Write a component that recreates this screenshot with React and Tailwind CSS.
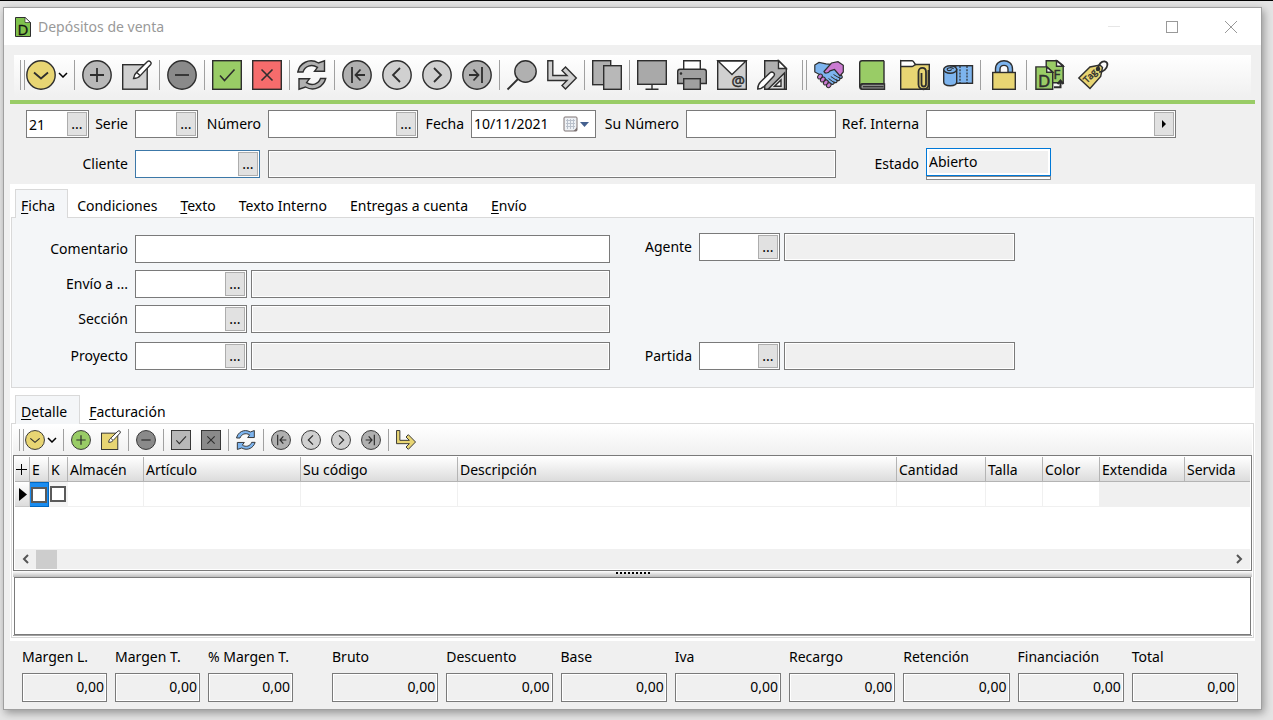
const INK = "#2e2e2e";

/* ---------- Icons (30x30 grid) ---------- */

function Icon({ size = 30, children }) {
  return (
    <svg
      width={size}
      height={size}
      viewBox="0 0 30 30"
      fill="none"
      stroke={INK}
      strokeWidth="1.4"
      className="shrink-0 overflow-visible"
      aria-hidden="true"
    >
      {children}
    </svg>
  );
}

function Circle({ size, fill, d }) {
  return (
    <Icon size={size}>
      <circle cx="15" cy="15" r="14.2" fill={fill} />
      <path d={d} strokeWidth="1.8" />
    </Icon>
  );
}

function Square({ size, fill, d }) {
  return (
    <Icon size={size}>
      <rect x="0.7" y="0.7" width="28.6" height="28.6" fill={fill} />
      <path d={d} strokeWidth="1.6" />
    </Icon>
  );
}

const PATHS = {
  down: "M8 12.5 15 18.5 22 12.5",
  plus: "M15 8v14M8 15h14",
  minus: "M8 15h14",
  check: "M8 15.5 12.5 20.5 22.5 9.5",
  cross: "M9.5 9.5l11 11M20.5 9.5l-11 11",
  first: "M10 7v16M23 15H14M18.5 9.5 13.5 15l5 5.5",
  prev: "M18 8l-7 7 7 7",
  next: "M12 8l7 7-7 7",
  last: "M20 7v16M7 15h9M11.5 9.5 16.5 15l-5 5.5",
};

function EditIcon({ size, fill }) {
  return (
    <Icon size={size}>
      <rect x="0.7" y="4.7" width="24.5" height="24.5" fill={fill} />
      <path d="M11.5 18.5c.3-3 1.2-4.800 3.300-6.400L25.500 1.600c1.800-1.700 4.800.9 3.200 2.900L18.300 15.600c-1.700 2-3.600 2.900-6.800 2.900z" fill="#fff" />
      <path d="M14.800 12.500l3.200 3" />
    </Icon>
  );
}

function RefreshIcon({ size, fill }) {
  return (
    <Icon size={size}>
      <path d="M.8 12C2.500 3.500 12-2.500 21.500 3L27.500.8v10.500H17.500l3-4C14 3.500 8 6.500 6 12z" fill={fill} />
      <path d="M28.700 18.500C26.500 26.500 17.500 32 8.500 27L2 29.200V18.700h10.500l-3 4c5.500 3.500 12 1.500 14-4.200z" fill={fill} />
    </Icon>
  );
}

function ForwardIcon({ size, fill }) {
  return (
    <Icon size={size}>
      <path d="M.8.8h5v14.700H20l-5-5L18.500 7l10.800 11-10.800 11-3.500-3.500 5-5H.8z" fill={fill} />
    </Icon>
  );
}

function SearchIcon() {
  return (
    <Icon>
      <path d="M.5 29.5 11.500 18.500" strokeWidth="1.8" />
      <circle cx="18.500" cy="11.500" r="10.700" fill="#b0b0b0" />
    </Icon>
  );
}

function CopyIcon() {
  return (
    <Icon>
      <rect x=".7" y=".7" width="18" height="24" fill="#b0b0b0" />
      <rect x="11.7" y="5.7" width="17.6" height="23.6" fill="#b8b8b8" />
    </Icon>
  );
}

function MonitorIcon() {
  return (
    <Icon>
      <rect x=".7" y=".7" width="28.6" height="23.6" fill="#a9a9a9" />
      <path d="M15 24v5M8.500 29.300h13" />
    </Icon>
  );
}

function PrinterIcon() {
  return (
    <Icon>
      <path d="M6.700 9V.7h16.600V9" fill="#fff" />
      <path d="M3 9.200h24c1.500 0 2.300.8 2.300 2.300v12H.7v-12C.7 10 1.500 9.200 3 9.200z" fill="#a0a0a0" />
      <rect x="6.7" y="18.7" width="16.6" height="10.6" fill="#a0a0a0" />
      <circle cx="4" cy="13.5" r=".6" fill={INK} />
    </Icon>
  );
}

function MailIcon() {
  return (
    <Icon>
      <rect x=".7" y=".7" width="28.6" height="28.6" fill="#d0d0d0" />
      <path d="M1 1 15 14.500 29 1z" fill="#fff" />
      <text x="14.500" y="26" fontSize="15" fill={INK} strokeWidth=".5" fontFamily="Open Sans, sans-serif">@</text>
    </Icon>
  );
}

function DesignIcon() {
  return (
    <Icon>
      <path d="M7.700.7h14l7.600 7.600v21H7.700z" fill="#b0b0b0" />
      <path d="M21.500.7v7.800h7.800z" fill="#fff" />
      <path d="M11 29.300 27.500 13v16.300z" fill="#d8d8d8" />
      <path d="M17.500 26.300 24 20v6.300z" fill="#fff" />
      <path d="M.7 29c0-3 .8-5 2.800-7L13 12.700c2.500-2 5.800.8 3.700 3.500L7.500 26C5.500 28 3.700 29 .7 29z" fill="#fff" />
    </Icon>
  );
}

function HandshakeIcon() {
  return (
    <Icon>
      <g strokeWidth="1.2">
        <path d="M.8 5 5 2.500l7 1.300 5 .5 11 11.700c1 1.500-.8 3-2.300 2 .8 2-1 3.500-2.700 2.200.6 2-1.200 3.200-2.800 2 .3 2-2 3-3.700 1.300L5.500 14.500.8 12z" fill="#7db4ee" />
        <path d="M10 11.500 17.500 3l6.500-1.300 5.300 3.500V12l-3.300 4-5.500-6.500-4.500 1.300c-2 2.700-5.500 3-6 .7z" fill="#cb7bd2" />
      </g>
      <g fill="#cb7bd2" strokeWidth="1">
        <ellipse cx="6" cy="16.500" rx="2.700" ry="2" transform="rotate(-48 6 16.500)" />
        <ellipse cx="8.800" cy="19.500" rx="2.700" ry="2" transform="rotate(-48 8.800 19.500)" />
        <ellipse cx="11.800" cy="22.500" rx="2.700" ry="2" transform="rotate(-48 11.800 22.500)" />
        <ellipse cx="14.800" cy="25.300" rx="2.600" ry="2" transform="rotate(-48 14.800 25.300)" />
      </g>
      <path d="M19.500 14.500l5.800 3.500M16.800 16.500l6 4M14.500 18.500l5.500 4" strokeWidth="1" />
    </Icon>
  );
}

function BookIcon() {
  return (
    <Icon>
      <path d="M27 .7H5C3.500.7 2.700 1.500 2.700 3v23.500c0 1.800 1 2.800 2.800 2.800H27" fill="#99cc66" />
      <path d="M27 .7v23H6c-2.200 0-3 1.200-3 2.600" />
      <path d="M27.500 24H6c-3 0-3.300 5.300 0 5.300h21.500z" fill="#8c8c8c" />
      <path d="M6 26.700h20.500" strokeWidth="1.200" />
    </Icon>
  );
}

function FolderIcon() {
  return (
    <Icon>
      <path d="M.7.7v28.600h28.600V4.500H15z" fill="#e8d573" />
      <path d="M.7.7h11.600c1.500 0 2.200 3.300 3.200 3.800-1.500.5-1.700 2-3.200 2H.7z" fill="#fff" />
      <path d="M28.500 10v14.500c0 6.300-10 6.300-10 0V12c0-5.500 7.500-5.500 7.500 0v12c0 3.300-4.500 3.300-4.500 0V13" strokeWidth="1.800" />
    </Icon>
  );
}

function RollIcon() {
  return (
    <Icon>
      <rect x="12" y="5.7" width="17.5" height="17.6" fill="#7db4ee" />
      <path d="M17 6v17M24 6v17" strokeDasharray="2 1.2" strokeWidth="1.2" />
      <path d="M.7 9.500V22c0 5 13 5 13 0V9.500z" fill="#7db4ee" />
      <ellipse cx="7.2" cy="9.5" rx="6.5" ry="3.8" fill="#7db4ee" />
      <path d="M10.500 9c-1-2-6.500-1.500-6.300.5.300 1.500 4.500 1.300 4-.3" strokeWidth="1.2" />
      <path d="M7.200 5.700H14" />
    </Icon>
  );
}

function LockIcon() {
  return (
    <Icon>
      <path d="M6.500 12.500V9c0-11 17-11 17 0v3.500H19V9.300c0-5.300-8-5.300-8 0v3.200z" fill="#7db4ee" />
      <rect x="3.7" y="12.5" width="22.6" height="16.8" fill="#e8d573" />
    </Icon>
  );
}

function InvoiceIcon() {
  return (
    <Icon>
      <path d="M11.200.7h11l6 5v17H11.200z" fill="#99cc66" />
      <path d="M21.500.7v5.500h6.700z" fill="#fff" />
      <text x="18.5" y="19" fontSize="13" fill={INK} strokeWidth=".5" fontFamily="Open Sans, sans-serif">F</text>
      <path d="M.9 6.900h11l5.800 5v17.300H.9z" fill="#99cc66" />
      <path d="M11.700 7v5.200h6z" fill="#fff" />
      <text x="3" y="26.5" fontSize="17" fill={INK} strokeWidth=".5" fontFamily="Open Sans, sans-serif">D</text>
      <path d="M19 27.300h6.500V22M22.500 24l3-3.500 3 3.500" strokeWidth="2" />
    </Icon>
  );
}

function TagIcon() {
  return (
    <Icon>
      <path d="M.8 18 12 7l10-2 2.500 2.500-1.800 9L12 28.500z" fill="#e8d573" />
      <circle cx="20" cy="9" r="1.6" fill={INK} />
      <path d="M20 9c0-4.500 3.500-8.200 7-7.500 3.800 1 2.700 5.500-.3 8.300-1.600 1.500-3.500 2.200-5.500 2.200" strokeWidth="1.8" />
      <text x="8" y="23" fontSize="9" fill={INK} strokeWidth=".4" fontFamily="Open Sans, sans-serif" transform="rotate(-45 9 22)">Tag</text>
    </Icon>
  );
}

function DocumentIcon() {
  return (
    <svg width="16" height="20" viewBox="0 0 16 20" fill="none" stroke={INK} className="overflow-visible" aria-hidden="true">
      <path d="M.5.5h9.500l5.500 5v14H.5z" fill="#7fc24c" />
      <path d="M10 .5v5h5.500z" fill="#fff" strokeWidth=".7" />
      <text x="2.5" y="17.5" fontSize="15" fill="#111" stroke="#111" strokeWidth=".3" fontFamily="Open Sans, sans-serif">D</text>
    </svg>
  );
}

/* ---------- Toolbar pieces ---------- */

function Separator({ narrow }) {
  return (
    <span className={`flex h-full shrink-0 items-center justify-center ${narrow ? "w-[3px]" : "w-[5px]"}`}>
      <span className="h-3/4 w-px bg-[#a0a0a0]" />
    </span>
  );
}

function Grip() {
  return <span className="h-3/4 w-[5px] shrink-0 border-x border-[#a0a0a0]" />;
}

function Tool({ label, wide, children }) {
  return (
    <button
      type="button"
      title={label}
      aria-label={label}
      className={`flex h-10 shrink-0 items-center justify-center ${wide ? "w-[43px]" : "w-10"}`}
    >
      {children}
    </button>
  );
}

function SmallTool({ label, children }) {
  return (
    <button
      type="button"
      title={label}
      aria-label={label}
      className="flex h-[30px] w-[30px] shrink-0 items-center justify-center"
    >
      {children}
    </button>
  );
}

function Caret() {
  return (
    <svg width="10" height="6" viewBox="0 0 10 6" fill="none" stroke="#000" strokeWidth="1.5" aria-hidden="true">
      <path d="M1 1l4 4 4-4" />
    </svg>
  );
}

function MainToolbar() {
  return (
    <div className="mx-[10px] flex h-[42px] items-start bg-linear-to-b from-white to-[#f0f0f0] pl-1.5">
      <div className="flex h-10 items-center">
        <Grip />
        <button type="button" aria-label="Menú" className="flex h-10 w-[47px] items-center gap-0.5 pl-px">
          <Circle fill="#e8d573" d={PATHS.down} />
          <Caret />
        </button>
        <Separator />
        <Tool label="Nuevo"><Circle fill="#b8b8b8" d={PATHS.plus} /></Tool>
        <Tool label="Editar"><EditIcon fill="#d0d0d0" /></Tool>
        <Separator />
        <Tool label="Borrar"><Circle fill="#8a8a8a" d={PATHS.minus} /></Tool>
        <Separator />
        <Tool label="Aceptar"><Square fill="#99cc66" d={PATHS.check} /></Tool>
        <Tool label="Cancelar"><Square fill="#f56c6c" d={PATHS.cross} /></Tool>
        <Separator />
        <Tool label="Refrescar"><RefreshIcon fill="#b0b0b0" /></Tool>
        <Separator />
        <Tool label="Primero"><Circle fill="#b0b0b0" d={PATHS.first} /></Tool>
        <Tool label="Anterior"><Circle fill="#d0d0d0" d={PATHS.prev} /></Tool>
        <Tool label="Siguiente"><Circle fill="#d0d0d0" d={PATHS.next} /></Tool>
        <Tool label="Último"><Circle fill="#b0b0b0" d={PATHS.last} /></Tool>
        <Separator />
        <Tool label="Buscar"><SearchIcon /></Tool>
        <Tool label="Ir a"><ForwardIcon fill="#d0d0d0" /></Tool>
        <Separator />
        <Tool label="Duplicar"><CopyIcon /></Tool>
        <Separator />
        <Tool label="Pantalla"><MonitorIcon /></Tool>
        <Tool label="Imprimir"><PrinterIcon /></Tool>
        <Tool label="Correo"><MailIcon /></Tool>
        <Tool label="Diseñar"><DesignIcon /></Tool>
      </div>
      <div className="ml-2.5 flex h-10 items-center">
        <Grip />
        <Tool wide label="Acuerdos"><HandshakeIcon /></Tool>
        <Tool wide label="Libro"><BookIcon /></Tool>
        <Tool wide label="Adjuntos"><FolderIcon /></Tool>
        <Tool wide label="Rollo"><RollIcon /></Tool>
        <Separator narrow />
        <Tool wide label="Bloquear"><LockIcon /></Tool>
        <Separator narrow />
        <Tool wide label="Facturar"><InvoiceIcon /></Tool>
        <Tool wide label="Etiquetas"><TagIcon /></Tool>
      </div>
    </div>
  );
}

function DetailToolbar() {
  return (
    <div className="flex h-[30px] items-center bg-linear-to-b from-white to-[#f0f0f0] pl-1.5">
      <Grip />
      <button type="button" aria-label="Menú detalle" className="flex h-[30px] w-[37px] items-center gap-0.5 pl-px">
        <Circle size={20} fill="#e8d573" d={PATHS.down} />
        <Caret />
      </button>
      <Separator />
      <SmallTool label="Nueva línea"><Circle size={20} fill="#99cc66" d={PATHS.plus} /></SmallTool>
      <SmallTool label="Editar línea"><EditIcon size={20} fill="#e8d573" /></SmallTool>
      <Separator />
      <SmallTool label="Borrar línea"><Circle size={20} fill="#8a8a8a" d={PATHS.minus} /></SmallTool>
      <Separator />
      <SmallTool label="Aceptar línea"><Square size={20} fill="#b8b8b8" d={PATHS.check} /></SmallTool>
      <SmallTool label="Cancelar línea"><Square size={20} fill="#8a8a8a" d={PATHS.cross} /></SmallTool>
      <Separator />
      <SmallTool label="Refrescar líneas"><RefreshIcon size={20} fill="#7db4ee" /></SmallTool>
      <Separator />
      <SmallTool label="Primera línea"><Circle size={20} fill="#b0b0b0" d={PATHS.first} /></SmallTool>
      <SmallTool label="Línea anterior"><Circle size={20} fill="#d0d0d0" d={PATHS.prev} /></SmallTool>
      <SmallTool label="Línea siguiente"><Circle size={20} fill="#d0d0d0" d={PATHS.next} /></SmallTool>
      <SmallTool label="Última línea"><Circle size={20} fill="#b0b0b0" d={PATHS.last} /></SmallTool>
      <Separator />
      <SmallTool label="Ir a línea"><ForwardIcon size={20} fill="#e8d573" /></SmallTool>
    </div>
  );
}

/* ---------- Form pieces ---------- */

function Label({ htmlFor, className, children }) {
  return (
    <label htmlFor={htmlFor} className={`shrink-0 pr-[7px] text-right whitespace-nowrap ${className}`}>
      {children}
    </label>
  );
}

// Text box with the "..." search button at its right end
function Lookup({ id, className, value = "", border = "border-[#7a7a7a]", glyph = "..." }) {
  return (
    <div className={`flex h-7 shrink-0 items-center border bg-white pr-px ${border} ${className}`}>
      <input id={id} defaultValue={value} className="h-full w-full min-w-0 flex-1 px-0.5 outline-none" />
      <button
        type="button"
        aria-label="Buscar valor"
        className="flex h-6 w-5 shrink-0 items-center justify-center border border-[#adadad] bg-[#e1e1e1] leading-5"
      >
        {glyph}
      </button>
    </div>
  );
}

function ReadOnly({ label, className }) {
  return (
    <input
      readOnly
      aria-label={label}
      className={`h-7 min-w-0 border border-[#7a7a7a] bg-[#f0f0f0] shadow-[inset_0_0_0_1px_#fff] outline-none ${className}`}
    />
  );
}

function Tab({ active, hot, children }) {
  return (
    <button
      type="button"
      role="tab"
      aria-selected={!!active}
      className={
        active
          ? "h-[29px] border border-b-0 border-[#d9d9d9] bg-[#f4f6f8] pt-1 pr-3 pl-[5px]"
          : "h-[29px] pt-1 pr-3.5 pl-[9px]"
      }
    >
      <span className="underline underline-offset-2">{hot}</span>
      {children}
    </button>
  );
}

function Header() {
  return (
    <div className="pt-1.5 pb-1 pl-[22px]">
      <div className="flex items-center">
        <Lookup id="ejercicio" className="w-[63px]" value="21" />
        <Label htmlFor="serie" className="w-[46px]">Serie</Label>
        <Lookup id="serie" className="w-[63px]" />
        <Label htmlFor="numero" className="w-[70px]">Número</Label>
        <Lookup id="numero" className="w-[150px]" />
        <Label htmlFor="fecha" className="w-[53px]">Fecha</Label>
        <div className="flex h-7 w-[125px] shrink-0 items-center border border-[#7a7a7a] bg-white pr-1.5">
          <input id="fecha" defaultValue="10/11/2021" className="w-full min-w-0 flex-1 px-0.5 outline-none" />
          <button type="button" aria-label="Calendario" className="flex shrink-0 items-center gap-0.5">
            <svg width="15" height="16" viewBox="0 0 15 16" fill="none" aria-hidden="true">
              <rect x="1" y="1" width="13" height="14" rx="1" fill="#eef1f5" stroke="#7d7272" />
              <path d="M3 4.500h9M3 7.500h9M3 10.500h9M4.500 3v10M7.500 3v10M10.500 3v10" stroke="#b9c0cb" />
              <path d="M14 11.500 10.500 15H14z" fill="#7d7272" />
            </svg>
            <svg width="9" height="5" viewBox="0 0 9 5" aria-hidden="true">
              <path d="M0 0h9L4.500 5z" fill="#44608f" />
            </svg>
          </button>
        </div>
        <Label htmlFor="sunumero" className="w-[90px]">Su Número</Label>
        <input id="sunumero" className="h-7 w-[150px] min-w-0 border border-[#7a7a7a] bg-white px-0.5 outline-none" />
        <Label htmlFor="refinterna" className="w-[90px]">Ref. Interna</Label>
        <Lookup
          id="refinterna"
          className="w-[250px]"
          glyph={
            <svg width="4" height="8" viewBox="0 0 4 8" aria-hidden="true">
              <path d="M0 0l4 4-4 4z" fill="#000" />
            </svg>
          }
        />
      </div>

      <div className="mt-2.5 flex items-center">
        <Label htmlFor="cliente" className="w-[109px]">Cliente</Label>
        <Lookup id="cliente" className="w-[125px]" border="border-[#3c78a8]" />
        <ReadOnly label="Nombre del cliente" className="ml-2 w-[568px]" />
        <Label htmlFor="estado" className="w-[90px]">Estado</Label>
        <div className="w-[125px] shrink-0">
          <select
            id="estado"
            className="block h-7 w-full appearance-none border border-[#0078d7] bg-[#f0f0f0] px-0.5 shadow-[inset_0_0_0_2px_#fff] outline-none"
          >
            <option>Abierto</option>
          </select>
          <div className="h-1 border border-[#888] bg-white" />
        </div>
      </div>
    </div>
  );
}

function LookupRow({ id, label }) {
  return (
    <div className="flex items-center">
      <Label htmlFor={id} className="w-[123px]">{label}</Label>
      <Lookup id={id} className="w-[112px]" />
      <ReadOnly label={`Nombre ${label}`} className="ml-1 flex-1" />
    </div>
  );
}

function SideRow({ id, label }) {
  return (
    <div className="flex items-center">
      <Label htmlFor={id} className="w-[89px]">{label}</Label>
      <Lookup id={id} className="w-[81px]" />
      <ReadOnly label={`Nombre ${label}`} className="ml-1 w-[231px]" />
    </div>
  );
}

function Ficha() {
  return (
    <section>
      <div role="tablist" className="relative -mb-px flex pl-1">
        <Tab active hot="F">icha</Tab>
        <Tab>Condiciones</Tab>
        <Tab hot="T">exto</Tab>
        <Tab>Texto Interno</Tab>
        <Tab>Entregas a cuenta</Tab>
        <Tab hot="E">nvío</Tab>
      </div>
      <div className="flex border border-[#d9d9d9] bg-[#f4f6f8] pt-[15px] pb-[17px]">
        <div className="flex w-[598px] shrink-0 flex-col gap-[7px] pt-0.5">
          <div className="flex items-center">
            <Label htmlFor="comentario" className="w-[123px]">Comentario</Label>
            <input id="comentario" className="h-7 min-w-0 flex-1 border border-[#7a7a7a] bg-white px-0.5 outline-none" />
          </div>
          <LookupRow id="envio" label="Envío a ..." />
          <LookupRow id="seccion" label="Sección" />
          <div className="pt-0.5">
            <LookupRow id="proyecto" label="Proyecto" />
          </div>
        </div>
        <div className="flex flex-col justify-between">
          <SideRow id="agente" label="Agente" />
          <SideRow id="partida" label="Partida" />
        </div>
      </div>
    </section>
  );
}

/* ---------- Detail grid ---------- */

const COLUMNS = [
  { title: "Almacén", width: "w-[76px]" },
  { title: "Artículo", width: "w-[157px]" },
  { title: "Su código", width: "w-[157px]" },
  { title: "Descripción", width: "" },
  { title: "Cantidad", width: "w-[89px]" },
  { title: "Talla", width: "w-[57px]" },
  { title: "Color", width: "w-[57px]" },
  { title: "Extendida", width: "w-[85px]", locked: true },
  { title: "Servida", width: "w-[65px]", locked: true },
];

const TH = "border-b border-[#b4b4b4] bg-linear-to-b from-white to-[#dcdcdc] px-0 pt-0.5 pb-0 text-left font-normal whitespace-nowrap";

function DetailGrid() {
  return (
    <div className="flex h-[116px] flex-col border border-[#7a7a7a] bg-white p-px">
      <table className="w-full table-fixed border-separate border-spacing-0">
        <thead>
          <tr className="h-[25px]">
            <th className={`w-[15px] border-r ${TH}`}>
              <svg width="12" height="12" viewBox="0 0 12 12" stroke="#000" className="ml-px" aria-hidden="true">
                <path d="M5.500 0v11M0 5.500h11" />
              </svg>
            </th>
            <th className={`w-[19px] border-r ${TH}`}><span className="pl-0.5">E</span></th>
            <th className={`w-[19px] border-r ${TH}`}><span className="pl-0.5">K</span></th>
            {COLUMNS.map((col, i) => (
              <th key={col.title} className={`${col.width} ${TH} ${i < COLUMNS.length - 1 ? "border-r" : ""}`}>
                <span className="pl-0.5">{col.title}</span>
              </th>
            ))}
          </tr>
        </thead>
        <tbody>
          <tr className="h-[25px]">
            <td className="border-r border-b border-[#c8c8c8] bg-linear-to-b from-white to-[#dcdcdc] p-0">
              <svg width="8" height="13" viewBox="0 0 8 13" className="ml-1" aria-hidden="true">
                <path d="M0 0l8 6.500L0 13z" fill="#000" />
              </svg>
            </td>
            <td className="border-y border-r border-[#0067c0] bg-[#1a8cf0] p-0">
              <input type="checkbox" aria-label="E" className="ml-px block size-4 appearance-none border-2 border-[#5a5a5a] bg-white" />
            </td>
            <td className="border-b border-[#f0f0f0] bg-[#f4f4f4] p-0">
              <input type="checkbox" aria-label="K" className="ml-px block size-4 appearance-none border-2 border-[#5a5a5a] bg-white" />
            </td>
            {COLUMNS.map((col) => (
              <td
                key={col.title}
                className={`border-r border-b border-[#f0f0f0] p-0 ${col.locked ? "bg-[#f0f0f0]" : "bg-white"}`}
              />
            ))}
          </tr>
        </tbody>
      </table>

      <div className="mt-auto flex h-5 items-center bg-[#f0f0f0]">
        <button type="button" aria-label="Desplazar a la izquierda" className="flex w-[21px] justify-center">
          <svg width="7" height="10" viewBox="0 0 7 10" fill="none" stroke="#555" strokeWidth="2" aria-hidden="true">
            <path d="M6 1 2 5l4 4" />
          </svg>
        </button>
        <span className="h-[19px] w-[21px] bg-[#cdcdcd]" />
        <button type="button" aria-label="Desplazar a la derecha" className="ml-auto flex w-[21px] justify-center">
          <svg width="7" height="10" viewBox="0 0 7 10" fill="none" stroke="#555" strokeWidth="2" aria-hidden="true">
            <path d="M1 1l4 4-4 4" />
          </svg>
        </button>
      </div>
    </div>
  );
}

function Detalle() {
  return (
    <section className="mt-[7px]">
      <div role="tablist" className="relative -mb-px flex pl-1">
        <Tab active hot="D">etalle</Tab>
        <Tab hot="F">acturación</Tab>
      </div>
      <div className="border border-[#d9d9d9] bg-white p-px">
        <DetailToolbar />
        <DetailGrid />
        <div className="flex h-1.5 justify-center gap-0.5 bg-linear-to-b from-white to-[#bdbdbd] pt-px">
          {[...Array(9)].map((_, i) => (
            <span key={i} className="size-0.5 bg-black" />
          ))}
        </div>
        <div className="border-b border-[#a0a0a0] px-px">
          <textarea
            aria-label="Texto de la línea"
            className="block h-[58px] w-full resize-none border border-[#7a7a7a] bg-white outline-none"
          />
        </div>
      </div>
    </section>
  );
}

/* ---------- Totals ---------- */

function Total({ id, label }) {
  return (
    <div className="min-w-0">
      <label htmlFor={id} className="block leading-5 whitespace-nowrap">{label}</label>
      <input
        id={id}
        readOnly
        value="0,00"
        className="mt-1.5 block h-[29px] w-full border border-[#7a7a7a] bg-[#f0f0f0] px-0.5 pb-0.5 text-right shadow-[inset_0_0_0_1px_#fff] outline-none"
      />
    </div>
  );
}

function Totals() {
  return (
    <div className="flex gap-[39px] pt-1.5 pr-[23px] pb-[7px] pl-[18px]">
      <div className="grid w-[271px] shrink-0 grid-cols-3 gap-2">
        <Total id="margenl" label="Margen L." />
        <Total id="margent" label="Margen T." />
        <Total id="pmargent" label="% Margen T." />
      </div>
      <div className="grid flex-1 grid-cols-8 gap-2">
        {["Bruto", "Descuento", "Base", "Iva", "Recargo", "Retención", "Financiación", "Total"].map((name) => (
          <Total key={name} id={name.toLowerCase()} label={name} />
        ))}
      </div>
    </div>
  );
}

function TitleBar() {
  return (
    <header className="flex h-[37px] items-center bg-white pl-[11px]">
      <DocumentIcon />
      <h1 className="pl-[7px] text-[#999]">Depósitos de venta</h1>
      <div className="ml-auto flex items-center">
        <button type="button" aria-label="Minimizar" className="flex h-9 w-[58px] items-center justify-center">
          <span className="h-px w-3 bg-[#e6e6e6]" />
        </button>
        <button type="button" aria-label="Maximizar" className="flex h-9 w-[58px] items-center justify-center">
          <span className="size-3 border border-[#999]" />
        </button>
        <button type="button" aria-label="Cerrar" className="flex h-9 w-[60px] items-center justify-center">
          <svg width="12" height="12" viewBox="0 0 12 12" stroke="#999" aria-hidden="true">
            <path d="M0 0l12 12M12 0 0 12" />
          </svg>
        </button>
      </div>
    </header>
  );
}

export default function App() {
  return (
    <div className="min-h-screen border-t border-black bg-[#e4e4e4] pt-1.5 pr-[11px] pb-2.5 pl-[3px] font-['Noto_Sans','Open_Sans',sans-serif] text-sm leading-5 text-black">
      <main className="border border-[#a0a0a0] bg-[#f0f0f0] shadow-[2px_3px_8px_rgba(0,0,0,0.35)]">
        <TitleBar />
        <div className="pt-2.5">
          <MainToolbar />
          <div className="mx-1.5 mt-[3px] h-1 bg-[#99cc66]" />
          <Header />
          <div className="mx-1.5 bg-white px-px pt-[5px] pb-[3px]">
            <Ficha />
            <Detalle />
          </div>
          <Totals />
        </div>
      </main>
    </div>
  );
}
